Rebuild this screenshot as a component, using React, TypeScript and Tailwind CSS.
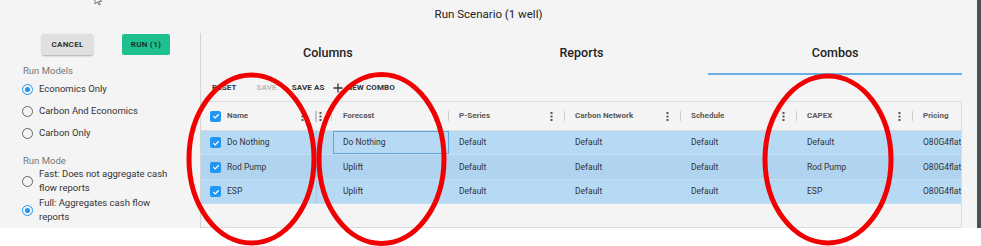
import React from "react";

const Dots = () => (
  <svg width="3" height="9" viewBox="0 0 3 9" className="shrink-0">
    <rect x="0.5" y="0" width="2" height="2" fill="#555" />
    <rect x="0.5" y="3.5" width="2" height="2" fill="#555" />
    <rect x="0.5" y="7" width="2" height="2" fill="#555" />
  </svg>
);

const Check = () => (
  <div className="w-[11px] h-[11px] rounded-[2px] bg-[#2196f3] flex items-center justify-center shrink-0">
    <svg width="8" height="8" viewBox="0 0 8 8">
      <path d="M1.3 4.1 L3.2 5.9 L6.7 2.2" fill="none" stroke="white" strokeWidth="1.3" />
    </svg>
  </div>
);

const Radio = ({ on }: { on?: boolean }) =>
  on ? (
    <div className="w-[11px] h-[11px] rounded-full border-[1.5px] border-[#2196f3] flex items-center justify-center shrink-0">
      <div className="w-[5px] h-[5px] rounded-full bg-[#2196f3]" />
    </div>
  ) : (
    <div className="w-[11px] h-[11px] rounded-full border-[1.5px] border-[#666] shrink-0" />
  );

const cols = ["Forecast", "P-Series", "Carbon Network", "Schedule", "CAPEX", "Pricing"];
const rows = [
  { name: "Do Nothing", vals: ["Do Nothing", "Default", "Default", "Default", "Default", "O80G4flat"], bg: "bg-[#b7daf4]" },
  { name: "Rod Pump", vals: ["Uplift", "Default", "Default", "Default", "Rod Pump", "O80G4flat"], bg: "bg-[#b0d4ef]" },
  { name: "ESP", vals: ["Uplift", "Default", "Default", "Default", "ESP", "O80G4flat"], bg: "bg-[#b7daf4]" },
];
const rowH = ["h-[24px]", "h-[25px]", "h-[24px]"];

export default function App() {
  return (
    <div className="relative w-[981px] h-[246px] bg-white overflow-hidden font-['Roboto',sans-serif]">
      <div className="flex h-[228px]">
        <div className="w-[977px] h-full bg-[#f4f4f4] flex flex-col">
          <div className="h-[33px] flex items-center justify-center pb-[3px] text-[11.5px] text-[#222]">
            Run Scenario (1 well)
          </div>
          <div className="flex flex-1 min-h-0">
            {/* Left panel */}
            <aside className="w-[200px] shrink-0 flex flex-col text-[9.5px] text-[#333]">
              <div className="flex pl-[42px] pt-[1px] gap-[29px]">
                <button className="w-[51px] h-[21px] rounded-[2px] bg-[#e0e0e0] shadow-[0_1px_2px_rgba(0,0,0,0.3)] text-[8px] font-bold text-[#333] tracking-[0.3px]">
                  CANCEL
                </button>
                <button className="w-[48px] h-[21px] rounded-[2px] bg-[#1fc08f] text-[8px] font-bold text-[#17352b] tracking-[0.3px]">
                  RUN (1)
                </button>
              </div>
              <div className="pl-[23px] mt-[10px] h-[12px] leading-[12px] text-[9.5px] text-[#777]">Run Models</div>
              <div className="flex flex-col pl-[22px] mt-[1px]">
                <div className="h-[22px] flex items-center gap-[6px]"><Radio on /><span>Economics Only</span></div>
                <div className="h-[22px] flex items-center gap-[6px]"><Radio /><span>Carbon And Economics</span></div>
                <div className="h-[23px] flex items-center gap-[6px]"><Radio /><span>Carbon Only</span></div>
              </div>
              <div className="pl-[23px] mt-[10px] h-[12px] leading-[12px] text-[9.5px] text-[#777]">Run Mode</div>
              <div className="flex flex-col pl-[22px] gap-[1px]">
                <div className="flex items-center gap-[6px]">
                  <Radio />
                  <span className="w-[135px] leading-[14px]">Fast: Does not aggregate cash flow reports</span>
                </div>
                <div className="flex items-center gap-[6px]">
                  <Radio on />
                  <span className="w-[135px] leading-[14px]">Full: Aggregates cash flow reports</span>
                </div>
              </div>
            </aside>

            {/* Right panel */}
            <main className="w-[762px] shrink-0 border-l border-[#d4d4d4] flex flex-col min-w-0">
              <div className="h-[42px] flex">
                {["Columns", "Reports", "Combos"].map((t, i) => (
                  <div key={t} className="flex-1 flex flex-col">
                    <div className="h-[40px] flex items-center justify-center text-[12.5px] font-medium text-[#222]">{t}</div>
                    <div className={i === 2 ? "h-[2px] bg-[#6aafe6]" : "h-[2px]"} />
                  </div>
                ))}
              </div>
              <div className="h-[26px] flex items-center text-[8px] font-bold text-[#333] tracking-[0.1px]">
                <span className="ml-[11px]">RESET</span>
                <span className="ml-[20px] text-[#bbb]">SAVE</span>
                <span className="ml-[15px]">SAVE AS</span>
                <svg width="10" height="10" viewBox="0 0 10 10" className="ml-[9px]">
                  <path d="M5 0.5 V9.5 M0.5 5 H9.5" stroke="#333" strokeWidth="1.3" />
                </svg>
                <span className="ml-[3px]">NEW COMBO</span>
              </div>
              {/* Table */}
              <div className="flex-1 border-t border-r border-b border-[#dcdcdc] overflow-hidden flex flex-col">
                <div className="h-[29px] shrink-0 flex border-b border-[#dcdcdc] text-[8px] font-bold text-[#5a5a5a]">
                  <div className="w-[116px] shrink-0 flex items-center pl-[9px]">
                    <Check />
                    <span className="ml-[6px] flex-1">Name</span>
                    <Dots />
                    <div className="ml-[11px] w-[2px] h-[11px] bg-[#c4c4c4]" />
                  </div>
                  <div className="w-[16px] shrink-0 flex items-center pl-[2px]">
                    <Dots />
                    <div className="ml-[9px] w-[1px] h-[10px] bg-[#cfcfcf]" />
                  </div>
                  {cols.map((c) => (
                    <div key={c} className="w-[116px] shrink-0 flex items-center pl-[10px]">
                      <span className="flex-1">{c}</span>
                      <Dots />
                      <div className="ml-[11px] w-[1px] h-[10px] bg-[#cfcfcf]" />
                    </div>
                  ))}
                </div>
                {rows.map((r, ri) => (
                  <div key={r.name} className={`${rowH[ri]} shrink-0 flex ${r.bg} border-b border-[#c8dff0] text-[8.5px] text-[#333]`}>
                    <div className="w-[116px] shrink-0 flex items-center pl-[9px] border-r border-[#a9c9e3]">
                      <Check />
                      <span className="ml-[6px]">{r.name}</span>
                    </div>
                    <div className="w-[16px] shrink-0" />
                    {r.vals.map((v, ci) => (
                      <div
                        key={ci}
                        className={
                          ri === 0 && ci === 0
                            ? "w-[116px] shrink-0 flex items-center pl-[9px] border border-[#62a5dd]"
                            : "w-[116px] shrink-0 flex items-center pl-[10px]"
                        }
                      >
                        {v}
                      </div>
                    ))}
                  </div>
                ))}
              </div>
            </main>
          </div>
        </div>
        <div className="w-[4px] h-full bg-[#4e4e4e]" />
      </div>

      {/* mouse cursor */}
      <svg className="absolute left-[94px] top-[-6px] pointer-events-none" width="9" height="12" viewBox="0 0 9 12">
        <path d="M1 1 L1 10 L3.3 7.8 L5 11 L6.3 10.4 L4.7 7.3 L7.8 7.3 Z" fill="white" stroke="#555" strokeWidth="0.8" />
      </svg>

      {/* annotation ellipses */}
      <svg className="absolute left-0 top-0 pointer-events-none" width="981" height="246" viewBox="0 0 981 246">
        <ellipse cx="251.5" cy="159" rx="62.5" ry="84" fill="none" stroke="#f00000" strokeWidth="5" />
        <ellipse cx="381.5" cy="159" rx="62.5" ry="84.5" fill="none" stroke="#f00000" strokeWidth="5" />
        <ellipse cx="828" cy="159.5" rx="63" ry="83.5" fill="none" stroke="#f00000" strokeWidth="5" />
      </svg>
    </div>
  );
}
